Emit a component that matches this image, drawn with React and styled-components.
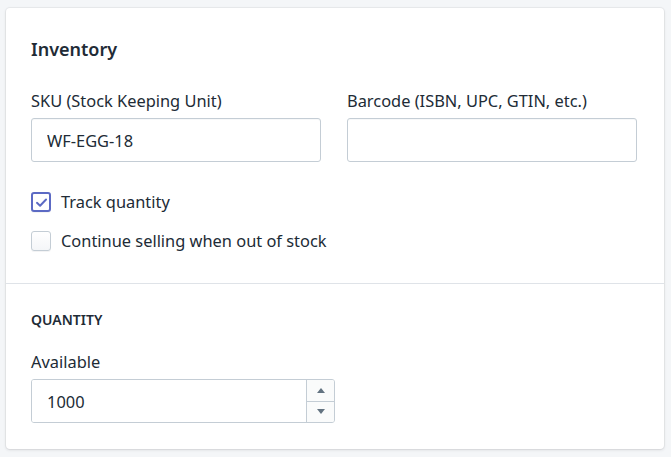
import React from "react";
import styled, { createGlobalStyle } from "styled-components";

const Global = createGlobalStyle`
  html, body { margin: 0; padding: 0; background: #f4f6f8; }
  body { font-family: "Noto Sans", "Open Sans", sans-serif; color: #212b36; }
  * { box-sizing: border-box; }
`;

const App = () => {
  return (
    <>
      <Global />
      <Page>
        <Card>
          <Section>
            <Title>Inventory</Title>
            <Row>
              <Field>
                <Label>SKU (Stock Keeping Unit)</Label>
                <TextBox defaultValue="WF-EGG-18" />
              </Field>
              <Field>
                <Label>Barcode (ISBN, UPC, GTIN, etc.)</Label>
                <TextBox defaultValue="" />
              </Field>
            </Row>
            <Checks>
              <CheckRow>
                <Box checked>
                  <svg width="13" height="13" viewBox="0 0 12 12">
                    <path d="M1.8 6.3 L4.7 9 L10.2 3.2" fill="none" stroke="#5c6ac4" strokeWidth="1.8" strokeLinecap="round" strokeLinejoin="round" />
                  </svg>
                </Box>
                <CheckText>Track quantity</CheckText>
              </CheckRow>
              <CheckRow>
                <Box />
                <CheckText>Continue selling when out of stock</CheckText>
              </CheckRow>
            </Checks>
          </Section>
          <Section divided>
            <SubTitle>QUANTITY</SubTitle>
            <Field narrow>
              <Label>Available</Label>
              <NumberWrap>
                <NumberText defaultValue="1000" />
                <Spinner>
                  <SpinButton>
                    <svg width="8" height="5" viewBox="0 0 8 5"><path d="M0 5 L4 0 L8 5 Z" fill="#637381" /></svg>
                  </SpinButton>
                  <SpinButton bottom>
                    <svg width="8" height="5" viewBox="0 0 8 5"><path d="M0 0 L4 5 L8 0 Z" fill="#637381" /></svg>
                  </SpinButton>
                </Spinner>
              </NumberWrap>
            </Field>
          </Section>
        </Card>
      </Page>
    </>
  );
};

const Page = styled.div`
  padding: 8px 7px 8px 6px;
`;

const Card = styled.div`
  background: #fff;
  border-radius: 4px;
  box-shadow: 0 0 0 1px rgba(63, 63, 68, 0.05), 0 1px 3px 0 rgba(63, 63, 68, 0.15);
`;

const Section = styled.div`
  padding: ${(p) => (p.divided ? "26px 25px 26px" : "29px 25px 31px")};
  border-top: ${(p) => (p.divided ? "1px solid #dfe3e8" : "none")};
`;

const Title = styled.h2`
  margin: 0 0 29px;
  font-size: 18px;
  font-weight: 600;
  line-height: 24px;
`;

const SubTitle = styled.h3`
  margin: 0 0 21px;
  font-size: 14px;
  font-weight: 600;
  line-height: 20px;
`;

const Row = styled.div`
  display: grid;
  grid-template-columns: 290px 290px;
  gap: 26px;
`;

const Field = styled.div`
  display: flex;
  flex-direction: column;
  width: ${(p) => (p.narrow ? "304px" : "auto")};
`;

const Label = styled.label`
  font-size: 16.4px;
  line-height: 22px;
  margin-bottom: 6px;
`;

const TextBox = styled.input`
  height: 44px;
  border: 1px solid #c4cdd5;
  border-radius: 3px;
  padding: 0 15px;
  font: inherit;
  font-size: 16.4px;
  color: #212b36;
  outline: none;
  box-shadow: inset 0 1px 0 0 rgba(99, 115, 129, 0.05);
`;

const Checks = styled.div`
  display: flex;
  flex-direction: column;
  gap: 17px;
  margin-top: 29px;
`;

const CheckRow = styled.div`
  display: flex;
  align-items: center;
  gap: 10px;
`;

const Box = styled.div`
  width: 20px;
  height: 20px;
  border-radius: 3px;
  border: ${(p) => (p.checked ? "2px solid #5c6ac4" : "1px solid #c4cdd5")};
  background: ${(p) => (p.checked ? "#fff" : "linear-gradient(#fff, #f4f6f8)")};
  box-shadow: 0 1px 0 0 rgba(22, 29, 37, 0.05);
  display: grid;
  place-items: center;
`;

const CheckText = styled.span`
  font-size: 16.4px;
  line-height: 22px;
`;

const NumberWrap = styled.div`
  display: flex;
  height: 44px;
  border: 1px solid #c4cdd5;
  border-radius: 3px;
  overflow: hidden;
`;

const NumberText = styled.input`
  flex: 1;
  min-width: 0;
  border: none;
  padding: 0 15px;
  font: inherit;
  font-size: 16.4px;
  color: #212b36;
  outline: none;
`;

const Spinner = styled.div`
  width: 28px;
  display: flex;
  flex-direction: column;
  border-left: 1px solid #c4cdd5;
`;

const SpinButton = styled.div`
  flex: 1;
  display: grid;
  place-items: center;
  background: #fafbfb;
  border-top: ${(p) => (p.bottom ? "1px solid #c4cdd5" : "none")};
`;

export default App;
